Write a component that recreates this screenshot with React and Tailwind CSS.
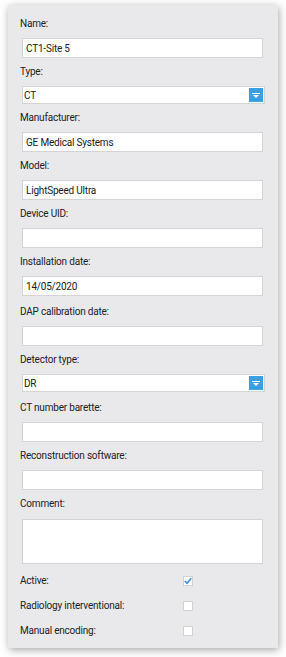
import React from 'react';

function TextField({ label, value = '', className = '' }) {
  return (
    <div className={`flex flex-col ${className}`}>
      <div className="h-[14px] leading-[14px]">{label}</div>
      <div className="ml-[2px] mr-[3px] mt-[7px] flex h-[20px] items-center border border-[#d4d4d6] bg-white px-[3px] text-[#1a1a1a]">
        {value}
      </div>
    </div>
  );
}

function SelectField({ label, value, className = '' }) {
  return (
    <div className={`flex flex-col ${className}`}>
      <div className="h-[14px] leading-[14px]">{label}</div>
      <div className="ml-[2px] mr-[1px] mt-[7px] flex h-[18px] items-center justify-between border border-[#d4d4d6] bg-white pl-[1px] pr-[1px] text-[#1a1a1a]">
        <span>{value}</span>
        <span className="flex h-[14px] w-[14px] items-center justify-center bg-[#3a9fe3]">
          <svg width="8" height="5" viewBox="0 0 8 5">
            <rect x="0" y="0" width="8" height="1" fill="#fff" />
            <path d="M1 2 H7 L4 5 Z" fill="#fff" />
          </svg>
        </span>
      </div>
    </div>
  );
}

function CheckRow({ label, checked }) {
  return (
    <div className="flex h-[25px] items-center">
      <span className="w-[163px]">{label}</span>
      <span className="relative h-[10px] w-[10px] border border-[#d2d2d4] bg-white">
        {checked && (
          <svg className="absolute left-0 top-0" width="8" height="8" viewBox="0 0 8 8">
            <path d="M0.8 4 L3 6.2 L7.2 1.2" stroke="#3a8fd8" strokeWidth="1.6" fill="none" />
          </svg>
        )}
      </span>
    </div>
  );
}

export default function App() {
  return (
    <div className="min-h-[657px] bg-white pt-[5px] pl-[8px]" style={{ fontFamily: 'Roboto, "Liberation Sans", sans-serif' }}>
      <div className="flex h-[643px] w-[270px] flex-col bg-[#e9e9eb] px-[12px] pt-[12px] text-[10px] tracking-[-0.2px] text-[#222] shadow-[1px_2px_8px_rgba(0,0,0,0.35)]">
        <div className="flex flex-col gap-[7px]">
          <TextField label="Name:" value="CT1-Site 5" />
          <SelectField label="Type:" value="CT" />
          <TextField label="Manufacturer:" value="GE Medical Systems" />
          <TextField label="Model:" value="LightSpeed Ultra" />
          <TextField label="Device UID:" />
          <TextField label="Installation date:" value="14/05/2020" />
          <TextField label="DAP calibration date:" className="mt-[2px]" />
          <SelectField label="Detector type:" value="DR" className="mb-[2px]" />
          <TextField label="CT number barette:" />
          <TextField label="Reconstruction software:" />
          <div className="flex flex-col">
            <div className="h-[14px] leading-[14px]">Comment:</div>
            <div className="ml-[2px] mr-[3px] mt-[8px] h-[45px] border border-[#d4d4d6] bg-white" />
          </div>
        </div>
        <div className="mt-[4px] flex flex-col">
          <CheckRow label="Active:" checked />
          <CheckRow label="Radiology interventional:" />
          <CheckRow label="Manual encoding:" />
        </div>
      </div>
    </div>
  );
}
